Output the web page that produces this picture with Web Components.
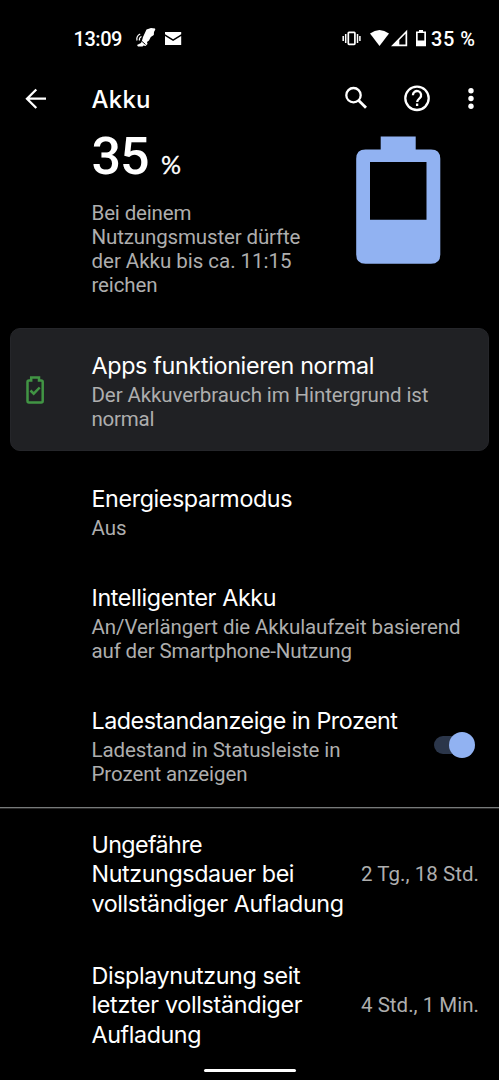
<!DOCTYPE html>
<html lang="de">
<head>
<meta charset="utf-8">
<title>Akku</title>
<style>
html,body{margin:0;background:#000;overflow:hidden}
body{width:499px;height:1080px}
</style>
</head>
<body>
<battery-screen></battery-screen>
<script>
const define = (name, html, after) => customElements.define(name, class extends HTMLElement {
  connectedCallback() {
    if (this.shadowRoot) return;
    this.attachShadow({mode: 'open'}).innerHTML = html;
    if (after) after.call(this, this.shadowRoot);
  }
});

/* One line of text whose tracking is adjusted to fill the given width. */
define('text-line', `<style>
:host{display:block;white-space:nowrap}
span{display:inline-block;line-height:inherit;vertical-align:top}
</style><span><slot></slot></span>`, function (root) {
  const span = root.querySelector('span');
  const w = parseFloat(this.getAttribute('w'));
  const n = this.textContent.length;
  if (!w || n < 2) return;
  const gap = (w - span.getBoundingClientRect().width) / (n - 1);
  span.style.letterSpacing = gap.toFixed(3) + 'px';
  span.style.marginRight = (-gap).toFixed(3) + 'px';
});

define('status-bar', `<style>
:host{display:flex;height:76px;box-sizing:border-box;padding:26px 24px 0 73.500px;align-items:flex-start;color:#fff;font:500 20px/26px Roboto,sans-serif}
svg{display:block;flex:none}
.s{flex:1}
.t{margin-top:-.4px}
</style>
<text-line class="t" w="49">13:09</text-line>
<svg style="margin:2px 0 0 12px" width="22" height="22" viewBox="0 0 22 22"><path fill="#fff" d="M11.500 1.500 16 0l4 .5.3 1-1.300 2.500-.2 3-3 2-1.800 3.500-2 1.500.5 2-2 2-2-.5-1 1H3l-1-1.500 4-2 .8-1.800L8 9z"/><path d="M2 12.500q-1-4.500 3.200-6.500M4.500 12.500q-.7-2.800 2-4" fill="none" stroke="#fff" stroke-width="1.200"/><path d="m6.500 13 4 3.500" stroke="#000"/></svg>
<svg style="margin:6px 0 0 8.500px" width="17" height="14" viewBox="0 0 17 14"><path fill="#fff" d="M0 0h16.200v2.200L8.100 7.200 0 2.200zM0 4l8.100 5 8.100-5v9H0z"/></svg>
<div class="s"></div>
<svg style="margin-top:4px" width="19" height="17" viewBox="0 0 19 17"><path d="M1.200 6v5M3.700 4v9M15.500 4v9M17.900 6v5" stroke="#fff" stroke-width="1.500"/><rect x="6.300" y="2.300" width="6.600" height="12" rx=".7" fill="none" stroke="#fff" stroke-width="1.700"/></svg>
<svg style="margin:3px 0 0 8.500px" width="20" height="18" viewBox="0 0 20 18"><path fill="#fff" d="M0 4.500Q9.500-2.500 19 4.500L9.500 17z"/></svg>
<svg style="margin:3px 0 0 1px" width="17" height="18" viewBox="0 0 17 18"><path fill="#fff" fill-rule="evenodd" d="M16.200.8v16.500H0zM14.500 4.800 8.300 11v4.600h6.200z"/></svg>
<svg style="margin:4px 0 0 8px" width="11" height="17" viewBox="0 0 11 17"><path fill="#fff" fill-rule="evenodd" d="M3 0h4v1.500h3V16.300H0V1.500h3zM1.700 3v7.500h6.600V3z"/></svg>
<text-line class="t" style="margin-left:4.500px" w="44">35 %</text-line>`);

define('app-bar', `<style>
:host{display:flex;height:52px;align-items:flex-start;color:#fff;padding-left:25px}
svg{display:block;flex:none;fill:none;stroke:#fff;stroke-width:2.300}
.title{margin:9.300px 193px 0 44.500px;width:60px;font:500 24px/30px Inter,sans-serif}
</style>
<svg style="margin-top:12px" width="22" height="22" viewBox="0 0 22 22"><path d="M21 10.700H2.300M11.300 1.500 2 10.700l9.300 9.300"/></svg>
<text-line class="title" w="59">Akku</text-line>
<svg style="margin-top:10px" width="24" height="25" viewBox="0 0 24 25"><circle cx="8.500" cy="9.200" r="7.200"/><path stroke-width="2.800" d="m13.700 14.400 7.300 7.300"/></svg>
<svg style="margin:9px 0 0 34px" width="28" height="28" viewBox="0 0 28 28"><circle cx="14" cy="13.300" r="11.700"/><path d="M9.900 10.200a4.100 4.100 0 1 1 7 2.800c-1.300 1.300-2.700 2-2.700 4.100M14.100 18.500v2.500"/></svg>
<svg style="margin:11px 0 0 35px" width="10" height="24" viewBox="0 0 10 24"><g fill="#fff" stroke="none"><circle cx="5" cy="3.800" r="2.700"/><circle cx="5" cy="11.500" r="2.700"/><circle cx="5" cy="19.300" r="2.700"/></g></svg>`);

define('battery-summary', `<style>
:host{display:flex;height:200px;padding-left:92px}
.info{width:264px}
.level{display:flex;height:60px;color:#fff;font:500 52px/60px Roboto,sans-serif;margin:-1.500px 0 0 -.5px}
.pct{margin:7.500px 0 0 11.500px;font:25px/60px Lato,sans-serif;-webkit-text-stroke:.3px #fff}
.note{margin:14.500px 0 0 -.5px;font:20.500px/24px Roboto,sans-serif;color:#aeaeae}
svg{display:block;margin-top:8px}
</style>
<div class="info"><div class="level"><text-line w="58">35</text-line><text-line class="pct">%</text-line></div>
<div class="note"><text-line w="100">Bei deinem</text-line><text-line w="209">Nutzungsmuster dürfte</text-line><text-line w="200">der Akku bis ca. 11:15</text-line><text-line w="66">reichen</text-line></div></div>
<svg width="85" height="129" viewBox="0 0 85 129"><path fill="#91b2f2" fill-rule="evenodd" d="M24.700.5h35V13.500H75q9.300 0 9.300 9.300V118.500q0 9.300-9.300 9.300H9.500q-9.300 0-9.300-9.300V22.800q0-9.300 9.300-9.300H24.700zM14 26v57.700h56.500V26z"/></svg>`);

define('setting-row', `<style>
:host{display:flex;box-sizing:border-box;padding-left:91.500px}
.text{flex:1}
.title{display:block;margin-top:.8px;font:23.300px/29.500px Inter,sans-serif;color:#fff}
.sub{display:block;margin-top:2.700px;font:20.500px/24px Roboto,sans-serif;color:#aeaeae}
</style>
<div class="text"><slot class="title" name="title"></slot><slot class="sub" name="sub"></slot></div><slot name="end"></slot>`);

define('status-card', `<style>
:host{display:flex;box-sizing:border-box;height:123px;margin:0 10px;background:#202124;border-radius:10px;padding:21.500px 0 0 15px;border:1px solid #25262a}
svg{display:block;margin:25px 0 0;flex:none}
setting-row{padding-left:0;margin:-.3px 0 0 46.500px;flex:1}
</style>
<svg width="19" height="30" viewBox="0 0 19 30"><path fill="none" stroke="#419544" stroke-width="2.500" d="M5.200 4.500V1.500h7.800v3h2.200q1.500 0 1.500 1.500v19q0 1.500-1.500 1.500H3q-1.500 0-1.500-1.500V6Q1.500 4.500 3 4.500zM4.500 14.500l3.200 3.200 6-6.200"/></svg>
<setting-row><text-line slot="title" w="283">Apps funktionieren normal</text-line><text-line slot="sub" w="337">Der Akkuverbrauch im Hintergrund ist</text-line><text-line slot="sub" w="63">normal</text-line></setting-row>`);

define('toggle-switch', `<style>
:host{display:block;width:41px;height:26px;position:relative}
i{position:absolute;left:0;top:4px;width:36px;height:18px;border-radius:9px;background:#2b364a}
b{position:absolute;left:14.500px;top:0;width:26px;height:26px;border-radius:50%;background:#91b2f2}
</style><i></i><b></b>`);

define('value-label', `<style>
:host{display:block;font:20.500px/24px Roboto,sans-serif;color:#aeaeae}
</style><slot></slot>`);

define('battery-screen', `<style>
:host{display:flex;flex-direction:column;width:499px;height:1080px;background:#000;overflow:hidden}
:host>*{flex:none}
.energy{height:99px;margin-top:32px}
.smart{height:123.500px}
.percent{height:101.500px}
.line{height:1px;background:#777a7a;border-bottom:1px solid #292929}
.full{height:131px;margin-top:20px}
toggle-switch{margin:26.500px 24px 0 0}
value-label{margin:32.500px 20px 0 0}
.home{width:92px;height:3px;border-radius:2px;background:#fff;margin:0 auto}
</style>
<status-bar></status-bar>
<app-bar></app-bar>
<battery-summary></battery-summary>
<status-card></status-card>
<setting-row class="energy"><text-line slot="title" w="201">Energiesparmodus</text-line><text-line slot="sub" w="35">Aus</text-line></setting-row>
<setting-row class="smart"><text-line slot="title" w="185">Intelligenter Akku</text-line><text-line slot="sub" w="369">An/Verlängert die Akkulaufzeit basierend</text-line><text-line slot="sub" w="260.500">auf der Smartphone-Nutzung</text-line></setting-row>
<setting-row class="percent"><text-line slot="title" w="306.500">Ladestandanzeige in Prozent</text-line><text-line slot="sub" w="249">Ladestand in Statusleiste in</text-line><text-line slot="sub" w="156">Prozent anzeigen</text-line><toggle-switch slot="end"></toggle-switch></setting-row>
<div class="line"></div>
<setting-row class="full"><text-line slot="title" w="111">Ungefähre</text-line><text-line slot="title" w="203">Nutzungsdauer bei</text-line><text-line slot="title" w="252.500">vollständiger Aufladung</text-line><value-label slot="end"><text-line w="118">2 Tg., 18 Std.</text-line></value-label></setting-row>
<setting-row style="height:109px"><text-line slot="title" w="209">Displaynutzung seit</text-line><text-line slot="title" w="211">letzter vollständiger</text-line><text-line slot="title" w="110">Aufladung</text-line><value-label slot="end"><text-line w="118">4 Std., 1 Min.</text-line></value-label></setting-row>
<div class="home"></div>`);
</script>
</body>
</html>
